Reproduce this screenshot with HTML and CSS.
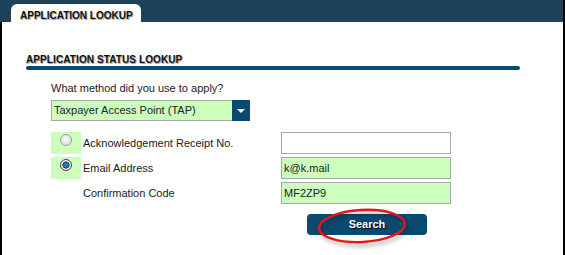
FILE: index.html
```html
<!DOCTYPE html>
<html lang="en">
<head>
    <meta charset="UTF-8">
    <title>Application Lookup</title>
    <link rel="stylesheet" href="styles.css">
</head>
<body>
    <div class="frame">
        <div class="topbar">
            <div class="tab">APPLICATION LOOKUP</div>
        </div>
        <div class="panel">
            <div class="section-title">APPLICATION STATUS LOOKUP</div>
            <div class="rule"></div>

            <div class="form">
                <div class="question">What method did you use to apply?</div>
                <div class="select">
                    <span class="select-text">Taxpayer Access Point (TAP)</span>
                    <span class="select-btn"><span class="arrow"></span></span>
                </div>

                <div class="grid">
                    <div class="radio-cell"><span class="radio"></span></div>
                    <div class="label">Acknowledgement Receipt No.</div>
                    <div class="input"></div>

                    <div class="radio-cell"><span class="radio checked"></span></div>
                    <div class="label">Email Address</div>
                    <div class="input filled">k@k.mail</div>

                    <div></div>
                    <div class="label">Confirmation Code</div>
                    <div class="input filled">MF2ZP9</div>
                </div>

                <div class="actions">
                    <div class="search-btn">Search</div>
                    <svg class="circle-mark" width="100" height="42" viewBox="0 0 100 42">
                        <ellipse cx="49" cy="20" rx="43" ry="16" transform="rotate(-3 49 20)" fill="none" stroke="#e31818" stroke-width="2.5"/>
                    </svg>
                </div>
            </div>
        </div>
    </div>
</body>
</html>
```

FILE: styles.css
```css
body {
    margin: 0;
    background: #fff;
    font-family: 'Liberation Sans', Arial, sans-serif;
    color: #1a1a1a;
}
.frame {
    width: 565px;
    height: 255px;
    background: #000;
}
.topbar {
    height: 22px;
    margin-right: 2px;
    background: #1d4259;
    padding-left: 11px;
    display: flex;
    align-items: flex-end;
}
.tab {
    background: #fff;
    height: 13px;
    padding: 5px 8px 0 9px;
    line-height: 13px;
    border-radius: 6px 6px 0 0;
    font-size: 10px;
    font-weight: bold;
    color: #111;
    white-space: nowrap;
    text-shadow: 1px 1px 1px #9a9a9a;
}
.panel {
    background: #fff;
    margin: 0 2px 0 2px;
    height: 208px;
    padding: 32px 0 0 24px;
}
.section-title {
    font-size: 10px;
    line-height: 12px;
    font-weight: bold;
    color: #111;
    letter-spacing: 0.1px;
    text-shadow: 1px 1px 1px #9a9a9a;
}
.rule {
    width: 494px;
    height: 4px;
    border-radius: 2px;
    background: #0b4a70;
}
.form {
    margin-left: 25px;
    padding-top: 12px;
}
.question {
    font-size: 11px;
    line-height: 13px;
    color: #222;
}
.select {
    margin-top: 5px;
    width: 199px;
    height: 21px;
    display: flex;
    background: #ccffbb;
    box-sizing: border-box;
    border: 1px solid #a8a8a8;
    border-right: none;
}
.select-text {
    flex: 1;
    font-size: 11px;
    line-height: 19px;
    padding-left: 2px;
    color: #222;
}
.select-btn {
    width: 18px;
    background: #0b4a70;
    margin: -1px 0;
    display: flex;
    align-items: center;
    justify-content: center;
}
.arrow {
    width: 0;
    height: 0;
    border-left: 4px solid transparent;
    border-right: 4px solid transparent;
    border-top: 4px solid #fff;
}
.grid {
    margin-top: 11px;
    display: grid;
    grid-template-columns: 30px 200px 170px;
    grid-auto-rows: 22px;
    row-gap: 3px;
}
.radio-cell {
    background: #ccffbb;
    display: flex;
    justify-content: center;
    align-items: flex-start;
    padding-top: 2px;
    box-sizing: border-box;
}
.radio {
    width: 12px;
    height: 12px;
    border-radius: 50%;
    box-sizing: border-box;
    border: 1px solid #a0a0a0;
    background: radial-gradient(circle at 45% 40%, #fafafa 0, #e4e4e4 60%, #cfcfcf 100%);
}
.radio.checked {
    border: 1px solid #444;
    background: radial-gradient(circle, #3b92d4 0, #1a5e94 2.6px, #0d2f4a 3.3px, #fff 3.9px, #fff 4.4px, #d8d8d8 5px);
}
.label {
    font-size: 11px;
    line-height: 22px;
    padding-left: 2px;
    color: #1a1a1a;
}
.input {
    box-sizing: border-box;
    border: 1px solid #a8a8a8;
    background: #fff;
    font-size: 11px;
    line-height: 20px;
    padding-left: 2px;
    color: #222;
}
.input.filled {
    background: #ccffbb;
}
.actions {
    position: relative;
    margin-top: 10px;
    margin-left: 256px;
    width: 120px;
}
.search-btn {
    height: 21px;
    border-radius: 4px;
    background: #0b4a70;
    color: #fff;
    font-size: 11px;
    font-weight: bold;
    line-height: 21px;
    text-align: center;
    text-shadow: 1px 1px 1px #000;
}
.circle-mark {
    position: absolute;
    left: 6px;
    top: -8px;
    filter: drop-shadow(2px 3px 2px rgba(0, 0, 0, 0.35));
}
```
